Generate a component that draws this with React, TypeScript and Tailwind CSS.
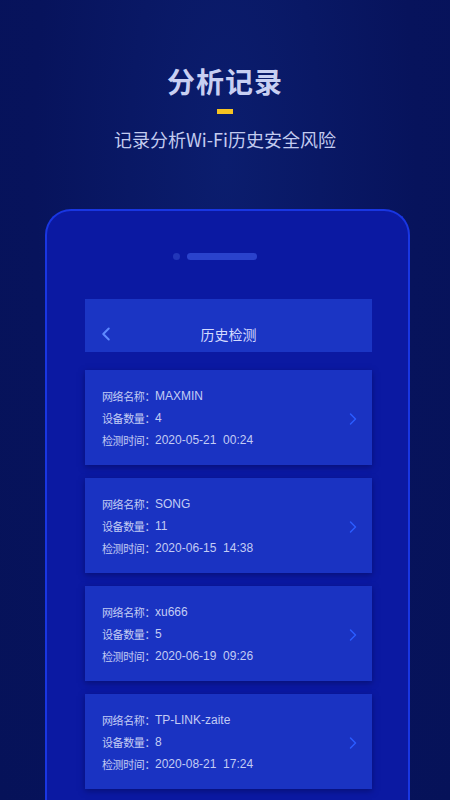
import { ChevronLeft, ChevronRight } from 'lucide-react'

const records = [
  { name: 'MAXMIN', count: '4', time: '2020-05-21  00:24' },
  { name: 'SONG', count: '11', time: '2020-06-15  14:38' },
  { name: 'xu666', count: '5', time: '2020-06-19  09:26' },
  { name: 'TP-LINK-zaite', count: '8', time: '2020-08-21  17:24' },
]

const font = { fontFamily: '"Noto Sans CJK SC", "Noto Sans", sans-serif' }
const latin = { fontFamily: '"Liberation Sans", "Noto Sans CJK SC", sans-serif' }

function Row({ label, value }: { label: string; value: string }) {
  return (
    <div className="flex h-[17px] items-center whitespace-pre leading-[17px]">
      <span className="text-[11px] tracking-[-0.4px]">{label}：</span>
      <span className="text-[12px]" style={latin}>{value}</span>
    </div>
  )
}

function RecordCard({ name, count, time }: { name: string; count: string; time: string }) {
  return (
    <div className="flex h-[95px] items-center justify-between bg-[#1a33c2] pl-[17px] pr-[9px] shadow-[0_2px_6px_rgba(5,10,90,0.6)]">
      <div className="mt-[1px] flex flex-col gap-[5px] text-[#c3ccf4]">
        <Row label="网络名称" value={name} />
        <Row label="设备数量" value={count} />
        <Row label="检测时间" value={time} />
      </div>
      <ChevronRight className="mt-[2px] h-[20px] w-[20px] text-[#2b5cff]" strokeWidth={1.8} />
    </div>
  )
}

export default function App() {
  return (
    <div
      className="flex h-[800px] w-[450px] flex-col items-center overflow-hidden bg-[radial-gradient(ellipse_at_50%_20%,#0b1d6e_0%,#07135c_60%,#061259_100%)]"
      style={font}
    >
      <h1 className="mt-[61px] text-[28px] font-bold leading-[40px] tracking-[1px] text-[#c8cff2]">分析记录</h1>
      <div className="mt-[8px] h-[5px] w-[16px] bg-[#f6c322]" />
      <p className="mt-[12px] text-[18px] leading-[26px] text-[#c3cbef]">记录分析Wi-Fi历史安全风险</p>

      <div className="ml-[45px] mt-[57px] flex w-[365px] flex-1 flex-col self-start rounded-t-[26px] border-x-2 border-t-2 border-[#1936e2] bg-[#0b19a2]">
        <div className="ml-[126px] mt-[42px] flex items-center gap-[7px]">
          <div className="h-[7px] w-[7px] rounded-full bg-[#2236b8]" />
          <div className="h-[7px] w-[70px] rounded-full bg-[#2a42cc]" />
        </div>

        <div className="ml-[38px] mt-[39px] flex w-[287px] flex-col">
          <div className="relative flex h-[53px] items-center justify-center bg-[#1b35c4]">
            <ChevronLeft className="absolute left-[10px] top-[24px] h-[22px] w-[22px] text-[#5f8aff]" strokeWidth={2.2} />
            <span className="mt-[17px] text-[14px] text-[#d3daff]">历史检测</span>
          </div>
          <div className="mt-[18px] flex flex-col gap-[13px]">
            {records.map((r) => (
              <RecordCard key={r.name} {...r} />
            ))}
          </div>
        </div>
      </div>
    </div>
  )
}
